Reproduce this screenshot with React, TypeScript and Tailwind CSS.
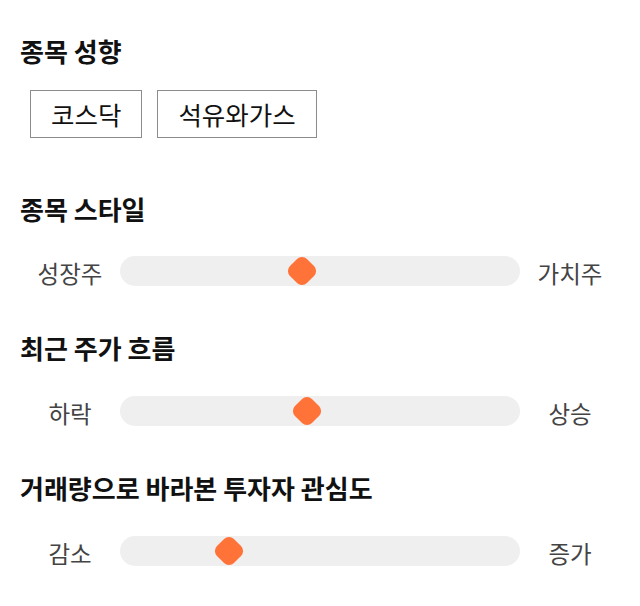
import React from "react";

const font = { fontFamily: '"Noto Sans CJK KR", "Noto Sans", sans-serif' };

type SliderProps = { left: string; right: string; center: number };

// center: thumb centre in px from the track's left edge
function Slider({ left, right, center }: SliderProps) {
  return (
    <div className="flex h-[30px] items-start">
      <span className="mt-[5px] w-[100px] text-center text-[23.5px] leading-[24px] text-[#444]">
        {left}
      </span>
      <div className="relative h-[30px] w-[400px] rounded-full bg-[#efefef]">
        <div
          className="absolute top-[3px] h-[24px] w-[24px] rotate-45 rounded-[7px] bg-[#ff7338]"
          style={{ left: center - 12 }}
        />
      </div>
      <span className="mt-[5px] w-[100px] text-center text-[23.5px] leading-[24px] text-[#444]">
        {right}
      </span>
    </div>
  );
}

export default function App() {
  return (
    <div className="w-[640px] bg-white px-5 pt-[34px] pb-10 text-[#111]" style={font}>
      <h2 className="text-[26px] font-bold leading-[34px]">종목 성향</h2>
      <div className="mt-[22px] ml-[10px] flex gap-[15px]">
        {["코스닥", "석유와가스"].map((t) => (
          <button
            key={t}
            className="h-[48px] border border-[#8c8c8c] px-[20px] text-[25.5px] leading-none text-[#111]"
          >
            {t}
          </button>
        ))}
      </div>

      <h2 className="mt-[54px] text-[26px] font-bold leading-[34px]">종목 스타일</h2>
      <div className="mt-[30px]">
        <Slider left="성장주" right="가치주" center={182} />
      </div>

      <h2 className="mt-[45px] text-[26px] font-bold leading-[34px]">최근 주가 흐름</h2>
      <div className="mt-[31px]">
        <Slider left="하락" right="상승" center={187} />
      </div>

      <h2 className="mt-[45px] text-[26px] font-bold leading-[34px]">거래량으로 바라본 투자자 관심도</h2>
      <div className="mt-[31px]">
        <Slider left="감소" right="증가" center={109} />
      </div>
    </div>
  );
}
